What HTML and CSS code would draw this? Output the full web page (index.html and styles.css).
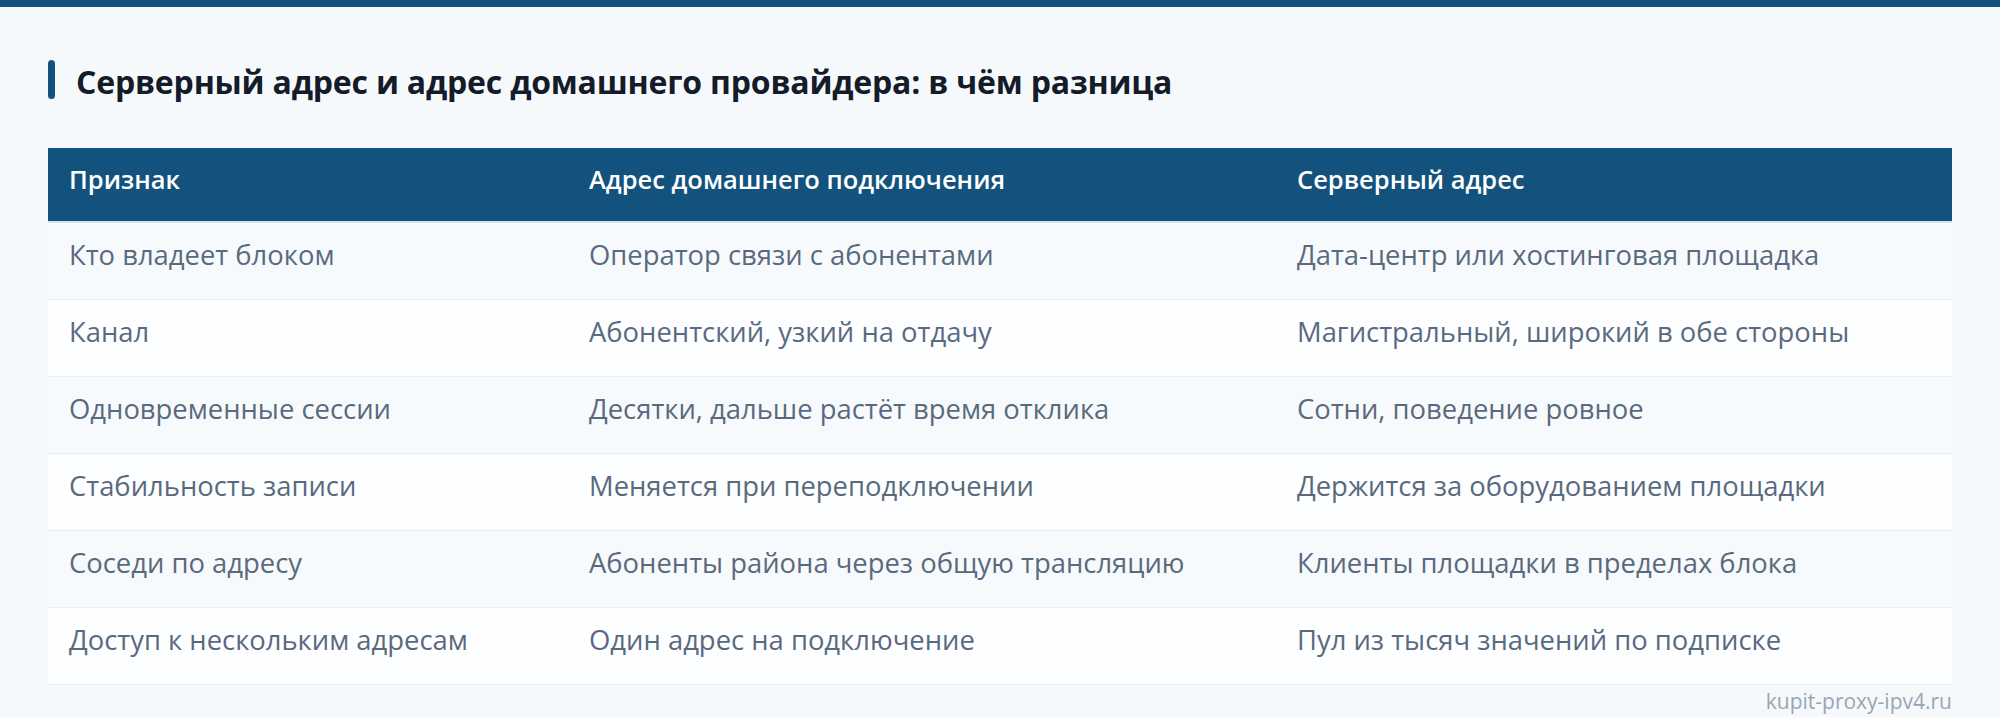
FILE: index.html
```html
<!DOCTYPE html>
<html lang="ru">
<head>
<meta charset="utf-8">
<title>Серверный адрес и адрес домашнего провайдера</title>
<link rel="stylesheet" href="styles.css">
</head>
<body>
<div class="topbar"></div>
<main class="page">
  <h2 class="title"><span class="accent"></span><span class="title-text">Серверный адрес и адрес домашнего провайдера: в чём разница</span></h2>
  <table class="cmp">
    <colgroup>
      <col class="c1"><col class="c2"><col class="c3">
    </colgroup>
    <thead>
      <tr><th>Признак</th><th>Адрес домашнего подключения</th><th>Серверный адрес</th></tr>
    </thead>
    <tbody>
      <tr><td>Кто владеет блоком</td><td>Оператор связи с абонентами</td><td>Дата-центр или хостинговая площадка</td></tr>
      <tr><td>Канал</td><td>Абонентский, узкий на отдачу</td><td>Магистральный, широкий в обе стороны</td></tr>
      <tr><td>Одновременные сессии</td><td>Десятки, дальше растёт время отклика</td><td>Сотни, поведение ровное</td></tr>
      <tr><td>Стабильность записи</td><td>Меняется при переподключении</td><td>Держится за оборудованием площадки</td></tr>
      <tr><td>Соседи по адресу</td><td>Абоненты района через общую трансляцию</td><td>Клиенты площадки в пределах блока</td></tr>
      <tr><td>Доступ к нескольким адресам</td><td>Один адрес на подключение</td><td>Пул из тысяч значений по подписке</td></tr>
    </tbody>
  </table>
  <div class="mark">kupit-proxy-ipv4.ru</div>
</main>
</body>
</html>
```
FILE: styles.css
```css
* { box-sizing: border-box; }
html, body { margin: 0; padding: 0; }
body {
  background: #f5f9fc;
  font-family: "Open Sans", "Noto Sans", sans-serif;
  width: 2000px;
  height: 717px;
  overflow: hidden;
}
.topbar {
  height: 7px;
  background: #14527e;
}
.page {
  padding: 0 48px;
}
.title {
  display: flex;
  align-items: center;
  gap: 21px;
  margin: 53px 0 0 0;
  height: 39px;
  font-size: 32px;
  font-weight: 700;
  color: #141b29;
  letter-spacing: -0.2px;
}
.title-text {
  padding-top: 4px;
}
.accent {
  width: 7px;
  height: 39px;
  border-radius: 4px;
  background: #14527e;
  flex: none;
}
.cmp {
  margin-top: 49px;
  width: 1904px;
  border-collapse: collapse;
  table-layout: fixed;
}
.c1 { width: 520px; }
.c2 { width: 708px; }
.c3 { width: 676px; }
.cmp th {
  background: #14527e;
  color: #ffffff;
  font-weight: 600;
  font-size: 25.5px;
  text-align: left;
  height: 74px;
  padding: 0 21px 12px 21px;
  border-bottom: 2px solid #d8e3ec;
}
.cmp td {
  height: 77px;
  padding: 0 21px 12px 21px;
  font-size: 27.4px;
  color: #5a6a7e;
  border-bottom: 1px solid #e8eef3;
}
.cmp tbody tr:nth-child(odd) td { background: #f7fafc; }
.cmp tbody tr:nth-child(even) td { background: #fdfeff; }
.mark {
  text-align: right;
  font-size: 21px;
  color: #9aa6b2;
  margin-top: 2px;
}
```
